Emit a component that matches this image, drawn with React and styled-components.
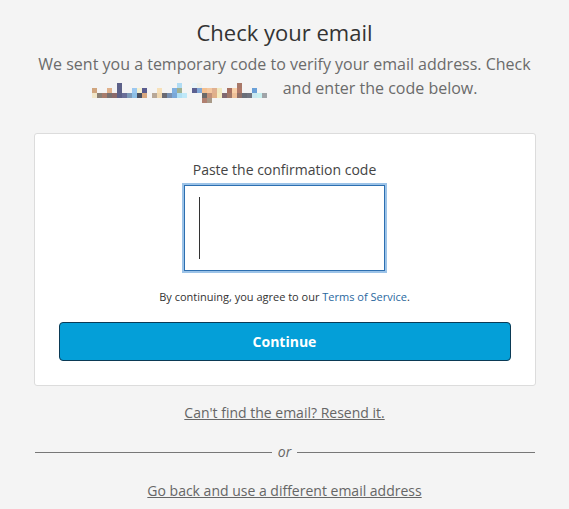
import styled, { createGlobalStyle } from 'styled-components';

const GlobalStyle = createGlobalStyle`
  html, body {
    margin: 0;
    padding: 0;
    background: #f4f4f4;
  }
  body {
    font-family: "Open Sans", "Liberation Sans", sans-serif;
    color: #333;
  }
`;

const Page = styled.div`
  width: 502px;
  margin: 0 auto;
  padding-top: 17px;
  text-align: center;
`;

const Title = styled.h1`
  margin: 0;
  font-size: 22px;
  line-height: 30px;
  font-weight: 400;
  color: #333;
`;

const Lead = styled.p`
  margin: 5px 0 0;
  font-size: 16px;
  line-height: 24px;
  color: #6b6b6b;
`;

const Blurred = styled.span`
  display: inline-block;
  width: 187px;
  height: 15px;
  margin-top: 6px;
  vertical-align: text-top;
  text-align: left;
`;

const BlurGrid = styled.span`
  display: grid;
  grid-template-columns: repeat(36, 5px);
  grid-template-rows: repeat(4, 5px);
`;

const Px = styled.span`
  background: ${p => p.$c};
`;

const Card = styled.div`
  margin-top: 33px;
  background: #fff;
  border: 1px solid #dcdcdc;
  border-radius: 3px;
  padding: 26px 24px 24px;
  display: flex;
  flex-direction: column;
  align-items: center;
`;

const Label = styled.label`
  font-size: 14px;
  line-height: 20px;
  color: #444;
`;

const CodeBox = styled.div`
  margin-top: 5px;
  width: 201px;
  height: 86px;
  border: 1px solid #2d6fb0;
  box-shadow: 0 0 0 2px #9cc3e8;
  background: #fff;
  padding: 11px 0 0 14px;
  box-sizing: border-box;
  display: flex;
  align-items: flex-start;
`;

const Caret = styled.span`
  display: block;
  width: 1px;
  height: 62px;
  background: #333;
`;

const Terms = styled.p`
  margin: 18px 0 0;
  font-size: 11px;
  line-height: 16px;
  color: #333;
`;

const TermsLink = styled.a`
  color: #2a68a0;
  text-decoration: none;
`;

const Button = styled.button`
  margin-top: 17px;
  width: 452px;
  height: 39px;
  border: 1px solid #0b3a55;
  border-radius: 4px;
  background: #049fd8;
  color: #fff;
  font-family: inherit;
  font-size: 14px;
  font-weight: 700;
  cursor: pointer;
`;

const TextLink = styled.a`
  display: block;
  margin-top: ${p => p.$top}px;
  font-size: 14px;
  line-height: 20px;
  color: #666;
  text-decoration: underline;
`;

const Divider = styled.div`
  margin-top: 19px;
  padding: 0 1px;
  display: flex;
  align-items: center;
  gap: 6px;
  font-size: 14px;
  line-height: 20px;
  font-style: italic;
  color: #666;

  &::before,
  &::after {
    content: "";
    flex: 1;
    height: 1px;
    background: #777;
  }
`;

const blur = [
  [1, 1, '#d0a57e'], [1, 2, '#f1e6c8'], [2, 2, '#8a7f74'], [3, 2, '#a87c6c'],
  [4, 1, '#e0b08a'], [4, 2, '#787070'], [5, 2, '#8c6a6a'],
  [6, 0, '#5c6088'], [6, 1, '#5c6088'], [6, 2, '#5c6088'],
  [7, 2, '#6a6e98'], [8, 2, '#7d9ab8'], [9, 1, '#9cc8f0'], [9, 2, '#8ec0e6'],
  [10, 1, '#f5f0d0'], [10, 2, '#4a5060'], [11, 1, '#5a5c90'], [11, 2, '#d8a880'],
  [13, 2, '#b8a898'], [14, 1, '#f7e0b8'], [14, 2, '#f0d8b0'], [15, 2, '#6a6a72'],
  [16, 2, '#7890b0'], [17, 1, '#80b0e0'], [17, 2, '#7aa8d8'],
  [18, 0, '#b0dcf4'], [18, 1, '#a0b090'], [18, 2, '#b0e0f4'], [19, 2, '#c0e8f8'],
  [21, 0, '#e8f4f8'], [21, 1, '#5c6090'], [22, 0, '#f0f0e8'], [22, 1, '#80a8d8'],
  [23, 1, '#f4c090'], [23, 2, '#6a6a6a'], [23, 3, '#b08070'],
  [24, 1, '#f4c8a0'], [24, 2, '#c09078'], [24, 3, '#a89a88'],
  [25, 1, '#e0b090'], [25, 2, '#e0b088'], [26, 1, '#f0e8c0'], [26, 2, '#f4ecc0'],
  [27, 2, '#806870'], [28, 1, '#a87060'], [28, 2, '#a07868'],
  [29, 1, '#f8d0a8'], [29, 2, '#f0c098'],
  [30, 0, '#a87868'], [30, 1, '#b07868'], [30, 2, '#907068'],
  [31, 2, '#6a6e78'], [32, 2, '#707480'], [33, 1, '#6aa0d8'], [33, 2, '#c8e8f0'],
  [34, 2, '#c8f0f0'], [35, 2, '#a0a4a8'],
];

function BlurredEmail() {
  return (
    <Blurred aria-hidden="true">
      <BlurGrid>
        {blur.map(([x, y, c], i) => (
          <Px key={i} $c={c} style={{ gridColumn: x, gridRow: y + 1 }} />
        ))}
      </BlurGrid>
    </Blurred>
  );
}

export default function App() {
  return (
    <>
      <GlobalStyle />
      <Page>
        <Title>Check your email</Title>
        <Lead>
          We sent you a temporary code to verify your email address. Check <BlurredEmail /> and enter the code below.
        </Lead>
        <Card>
          <Label>Paste the confirmation code</Label>
          <CodeBox>
            <Caret />
          </CodeBox>
          <Terms>
            By continuing, you agree to our <TermsLink href="#">Terms of Service</TermsLink>.
          </Terms>
          <Button>Continue</Button>
        </Card>
        <TextLink href="#" $top={17}>Can't find the email? Resend it.</TextLink>
        <Divider>or</Divider>
        <TextLink href="#" $top={19}>Go back and use a different email address</TextLink>
      </Page>
    </>
  );
}
